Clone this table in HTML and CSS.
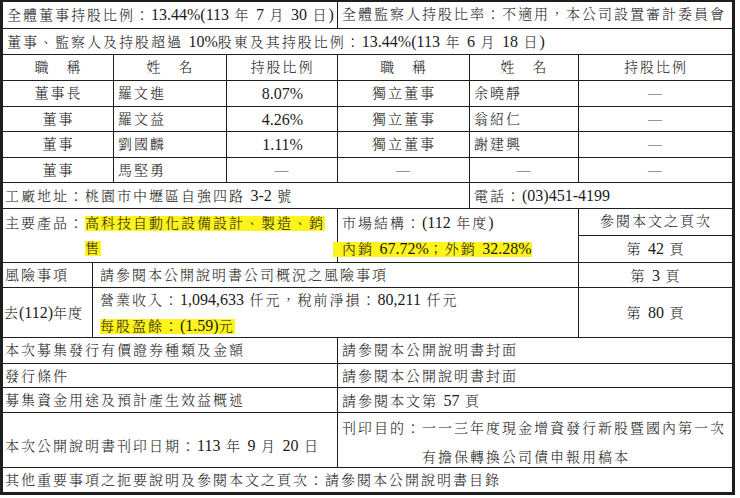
FILE: index.html
```html
<!DOCTYPE html>
<html lang="zh-Hant">
<head>
<meta charset="utf-8">
<title>公開說明書摘要</title>
<link rel="stylesheet" href="styles.css">
</head>
<body>
<div class="sheet">
  <div class="c w4">全體董事持股比例：<span class="n">13.44%(113</span> 年 <span class="n">7</span> 月 <span class="n">30</span> 日<span class="n">)</span></div>
  <div class="c w3">全體監察人持股比率：不適用，本公司設置審計委員會</div>

  <div class="c w7">董事、監察人及持股超過 <span class="n">10%</span>股東及其持股比例：<span class="n">13.44%(113</span> 年 <span class="n">6</span> 月 <span class="n">18</span> 日<span class="n">)</span></div>

  <div class="c w2 ctr">職　稱</div>
  <div class="c ctr">姓　名</div>
  <div class="c ctr">持股比例</div>
  <div class="c ctr">職　稱</div>
  <div class="c ctr">姓　名</div>
  <div class="c ctr">持股比例</div>

  <div class="c w2 ctr">董事長</div>
  <div class="c">羅文進</div>
  <div class="c ctr"><span class="n">8.07%</span></div>
  <div class="c ctr">獨立董事</div>
  <div class="c">余曉靜</div>
  <div class="c ctr dash">—</div>

  <div class="c w2 ctr">董事</div>
  <div class="c">羅文益</div>
  <div class="c ctr"><span class="n">4.26%</span></div>
  <div class="c ctr">獨立董事</div>
  <div class="c">翁紹仁</div>
  <div class="c ctr dash">—</div>

  <div class="c w2 ctr">董事</div>
  <div class="c">劉國麟</div>
  <div class="c ctr"><span class="n">1.11%</span></div>
  <div class="c ctr">獨立董事</div>
  <div class="c">謝建興</div>
  <div class="c ctr dash">—</div>

  <div class="c w2 ctr">董事</div>
  <div class="c">馬堅勇</div>
  <div class="c ctr dash">—</div>
  <div class="c ctr dash">—</div>
  <div class="c ctr dash">—</div>
  <div class="c ctr dash">—</div>

  <div class="c w5 pl1">工廠地址：桃園市中壢區自強四路 <span class="n">3-2</span> 號</div>
  <div class="c w2">電話：<span class="n">(03)451-4199</span></div>

  <div class="c v w4 h2 pl1">
    <div class="hang">
      <span class="lbl">主要產品：</span>
      <span class="txt"><span class="hl">高科技自動化設備設計、製造、銷<br>售</span></span>
    </div>
  </div>
  <div class="c v w2 h2">
    <div class="lines">市場結構：<span class="n">(112</span> 年度<span class="n">)</span><br><span class="hl mk">內銷 <span class="n">67.72%</span>；外銷 <span class="n">32.28%</span></span></div>
  </div>
  <div class="c ctr">參閱本文之頁次</div>
  <div class="c ctr">第 <span class="n">42</span> 頁</div>

  <div class="c pl1">風險事項</div>
  <div class="c w5 pl2">請參閱本公開說明書公司概況之風險事項</div>
  <div class="c ctr">第 <span class="n">3</span> 頁</div>

  <div class="c v pl1 tight"><div>去<span class="n">(112)</span>年度</div></div>
  <div class="c v w5 pl2"><div class="lines">營業收入：<span class="n">1,094,633</span> 仟元，稅前淨損：<span class="n">80,211</span> 仟元<br><span class="hl">每股盈餘：<span class="n">(1.59)</span>元</span></div></div>
  <div class="c v vc"><div>第 <span class="n">80</span> 頁</div></div>

  <div class="c w4 pl1">本次募集發行有價證券種類及金額</div>
  <div class="c w3">請參閱本公開說明書封面</div>

  <div class="c w4 pl1">發行條件</div>
  <div class="c w3">請參閱本公開說明書封面</div>

  <div class="c w4 pl1">募集資金用途及預計產生效益概述</div>
  <div class="c w3">請參閱本文第 <span class="n">57</span> 頁</div>

  <div class="c v w4 pl1 low"><div>本次公開說明書刊印日期：<span class="n">113</span> 年 <span class="n">9</span> 月 <span class="n">20</span> 日</div></div>
  <div class="c v w3 low2">
    <div class="hang wide">
      <span class="lbl">刊印目的：</span>
      <span class="txt">一一三年度現金增資發行新股暨國內第一次<br>有擔保轉換公司債申報用稿本</span>
    </div>
  </div>

  <div class="c w7 pl1">其他重要事項之扼要說明及參閱本文之頁次：請參閱本公開說明書目錄</div>
</div>
</body>
</html>
```

FILE: styles.css
```css
html, body {
  margin: 0;
  padding: 0;
  background: #ffffff;
}

.sheet {
  display: grid;
  grid-template-columns: 89px 20px 112px 110px 131px 108px 153px;
  grid-template-rows: 26px 25px 25px 25px 24px 25px 24px 25px 26px 26px 24px 49px 25px 23px 24px 54px 24px;
  gap: 1px;
  width: fit-content;
  background: #1e1e1e;
  border-style: solid;
  border-color: #1e1e1e;
  border-width: 2px 3px 3px 3px;
  font-family: "Liberation Serif", "Noto Serif CJK TC", "Noto Sans CJK TC", serif;
  font-size: 14px;
  font-weight: 300;
  letter-spacing: 2px;
  color: #1a1a1a;
  line-height: 25px;
}

.c {
  background: #ffffff;
  display: block;
  padding: 0 3px 0 4px;
  white-space: nowrap;
  min-width: 0;
}

.v {
  display: flex;
  align-items: center;
}

.vc {
  justify-content: center;
}

.w2 { grid-column: span 2; }
.w3 { grid-column: span 3; }
.w4 { grid-column: span 4; }
.w5 { grid-column: span 5; }
.w7 { grid-column: span 7; }
.h2 { grid-row: span 2; }

.ctr { text-align: center; }
.pl1 { padding-left: 2px; }
.pl2 { padding-left: 7px; }
.tight { letter-spacing: 1px; padding-left: 1px; }

.n {
  font-size: 16px;
  letter-spacing: 0;
}

.dash {
  color: #444444;
}

.hl {
  background: #fff31c;
}

.mk {
  padding-left: 9px;
  margin-left: -9px;
}

.hang {
  display: flex;
  align-items: flex-start;
}

.hang .lbl {
  flex: none;
}

.hang .txt {
  display: block;
}

.hang.wide {
  line-height: 29px;
}

.low {
  padding-top: 12px;
}

.low2 {
  padding-top: 6px;
}
```
